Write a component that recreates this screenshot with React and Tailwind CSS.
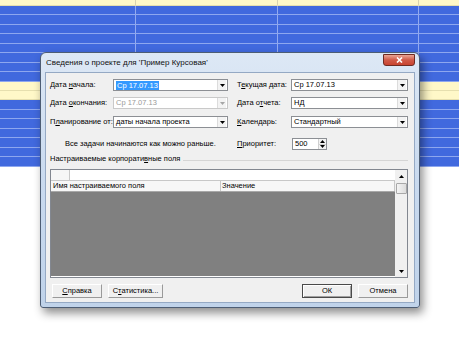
const ROWS = [
  { h: 'h-[6px]', yellow: true },
  { h: 'h-[9px]' }, { h: 'h-[10px]' }, { h: 'h-[9px]' }, { h: 'h-[10px]' },
  { h: 'h-[9px]' }, { h: 'h-[10px]' }, { h: 'h-[9px]' }, { h: 'h-[10px]' },
  { h: 'h-[9px]', yellow: true }, { h: 'h-[9px]', yellow: true },
  { h: 'h-[10px]' }, { h: 'h-[9px]' }, { h: 'h-[10px]' }, { h: 'h-[9px]' },
  { h: 'h-[10px]' }, { h: 'h-[9px]' }, { h: 'h-[10px]' },
];

function Arrow({ disabled, up }) {
  return (
    <svg width="5" height="3" viewBox="0 0 5 3">
      <path d={up ? 'M0 3h5L2.5 0z' : 'M0 0h5L2.5 3z'} fill={disabled ? '#a6a6a6' : '#000'} />
    </svg>
  );
}

function Combo({ value, selected, disabled, width }) {
  return (
    <div className={`h-[12px] flex items-center bg-white border ${width} ${disabled ? 'border-[#c9c9c9]' : 'border-[#8c8f94]'}`}>
      <div className="flex-1 pl-[2px] flex items-center overflow-hidden whitespace-nowrap">
        {selected ? (
          <span className="bg-[#3399ff] text-white px-[1px] leading-[9px]">{value}</span>
        ) : (
          <span className={disabled ? 'text-[#9a9a9a]' : 'text-black'}>{value}</span>
        )}
      </div>
      <div className="w-[9px] h-[10px] mr-[1px] flex items-center justify-center bg-[#f3f3f3] border-l border-[#dcdcdc]">
        <Arrow disabled={disabled} />
      </div>
    </div>
  );
}

function Btn({ children, width, isDefault }) {
  return (
    <div
      className={`h-[14px] ${width} flex items-center justify-center bg-[#f0f0f0] border ${
        isDefault
          ? 'border-[#4a4a4a] shadow-[inset_1px_1px_0_#fff,inset_-1px_-1px_0_#a0a0a0]'
          : 'border-t-white border-l-white border-r-[#9a9a9a] border-b-[#9a9a9a]'
      }`}
    >
      {children}
    </div>
  );
}

export default function App() {
  return (
    <div className="relative w-[459px] h-[360px] bg-white overflow-hidden font-['Liberation_Sans',Arial,sans-serif] text-[7.5px] text-black">
      {/* таблица на фоне */}
      <div className="flex flex-col">
        {ROWS.map((r, i) => (
          <div
            key={i}
            className={`${r.h} flex border-b ${r.yellow ? 'bg-[#fff8c8] border-[#e6dfae]' : 'bg-[#4169de] border-[#8ea7ef]'}`}
          >
            <div className={`w-[136px] border-r ${r.yellow ? 'border-[#d8d3b0]' : 'border-[#93aaf0]'}`} />
            <div className={`w-[142px] border-r ${r.yellow ? 'border-[#d8d3b0]' : 'border-[#93aaf0]'}`} />
            <div className={`w-[141px] border-r ${r.yellow ? 'border-[#d8d3b0]' : 'border-[#93aaf0]'}`} />
            <div className="flex-1" />
          </div>
        ))}
      </div>

      {/* окно диалога */}
      <div className="absolute left-[40px] top-[52px] w-[380px] h-[256px] rounded-t-[6px] rounded-b-[3px] border border-[#4d5d74] bg-gradient-to-b from-[#dde8f5] via-[#c9daef] to-[#c0d3ea] shadow-[3px_5px_10px_rgba(0,0,0,0.45)] flex flex-col px-[4px] pb-[4px]">
        <div className="h-[19px] flex items-center justify-between">
          <span className="pl-[1px] text-[8px] text-[#111] whitespace-nowrap">Сведения о проекте для 'Пример Курсовая'</span>
          <div className="w-[32px] h-[12px] -mt-[6px] rounded-b-[3px] border border-[#6e2b22] bg-gradient-to-b from-[#e9a595] via-[#d05a48] to-[#c8432f] flex items-center justify-center">
            <svg width="7" height="6" viewBox="0 0 7 6">
              <path d="M1 0.5l5 5M6 0.5l-5 5" stroke="#fff" strokeWidth="1.6" />
            </svg>
          </div>
        </div>

        <div className="flex-1 bg-[#f0f0f0] border border-[#95a9c4] flex flex-col pl-[4px] pr-[6px] pt-[6px]">
          {/* строки полей */}
          <div className="flex flex-col gap-[6px]">
            <div className="flex items-center">
              <div className="w-[63px] whitespace-nowrap">Дата <u>н</u>ачала:</div>
              <Combo width="w-[115px]" value="Ср 17.07.13" selected />
              <div className="w-[9px]" />
              <div className="w-[54px] whitespace-nowrap">Т<u>е</u>кущая дата:</div>
              <Combo width="w-[117px]" value="Ср 17.07.13" />
            </div>
            <div className="flex items-center">
              <div className="w-[63px] whitespace-nowrap">Дата <u>о</u>кончания:</div>
              <Combo width="w-[115px]" value="Ср 17.07.13" disabled />
              <div className="w-[9px]" />
              <div className="w-[54px] whitespace-nowrap">Дата о<u>т</u>чета:</div>
              <Combo width="w-[117px]" value="НД" />
            </div>
            <div className="flex items-center mt-[1px]">
              <div className="w-[63px] whitespace-nowrap">П<u>л</u>анирование от:</div>
              <Combo width="w-[115px]" value="даты начала проекта" />
              <div className="w-[9px]" />
              <div className="w-[54px] whitespace-nowrap"><u>К</u>алендарь:</div>
              <Combo width="w-[117px]" value="Стандартный" />
            </div>
          </div>

          <div className="flex items-center mt-[10px] h-[12px]">
            <div className="w-[187px] pl-[15px] whitespace-nowrap">Все задачи начинаются как можно раньше.</div>
            <div className="w-[55px] whitespace-nowrap"><u>П</u>риоритет:</div>
            <div className="w-[35px] h-[12px] bg-white border border-[#8c8f94] flex items-center">
              <span className="flex-1 pl-[2px]">500</span>
              <div className="w-[8px] h-full flex flex-col border-l border-[#d0d0d0] bg-[#f3f3f3]">
                <div className="flex-1 flex items-center justify-center border-b border-[#d0d0d0]"><Arrow up /></div>
                <div className="flex-1 flex items-center justify-center"><Arrow /></div>
              </div>
            </div>
          </div>

          <div className="flex items-center mt-[4px] h-[10px]">
            <span className="whitespace-nowrap">Настраиваемые корпорати<u>в</u>ные поля</span>
            <div className="flex-1 ml-[3px] mt-[2px] border-t border-[#d5d5d5]" />
          </div>

          {/* таблица полей */}
          <div className="mt-[5px] w-[358px] h-[109px] border border-[#828790] bg-white flex">
            <div className="flex-1 flex flex-col">
              <div className="h-[11px] flex border-b border-[#c8c8c8]">
                <div className="w-[19px] border-r border-[#c8c8c8] bg-[#f6f6f6]" />
                <div className="flex-1" />
              </div>
              <div className="h-[11px] flex border-b border-[#a8a8a8] bg-[#f7f7f7]">
                <div className="w-[170px] pl-[2px] border-r border-[#c8c8c8] flex items-center whitespace-nowrap">Имя настраиваемого поля</div>
                <div className="flex-1 pl-[1px] flex items-center border-r border-[#c8c8c8]">Значение</div>
              </div>
              <div className="flex-1 bg-[#808080]" />
              <div className="h-[1px]" />
            </div>
            <div className="w-[12px] bg-[#f0f0f0] flex flex-col items-center">
              <div className="h-[12px] flex items-center justify-center"><Arrow up /></div>
              <div className="mt-[1px] w-[11px] h-[11px] rounded-[1px] border border-[#a8a8a8] bg-gradient-to-r from-[#f4f4f4] to-[#dcdcdc]" />
              <div className="flex-1" />
              <div className="h-[12px] flex items-center justify-center"><Arrow /></div>
            </div>
          </div>

          {/* кнопки */}
          <div className="mt-[6px] flex items-center pl-[2px]">
            <Btn width="w-[50px]"><u>С</u>правка</Btn>
            <div className="w-[6px]" />
            <Btn width="w-[55px]">С<u>т</u>атистика...</Btn>
            <div className="flex-1" />
            <Btn width="w-[50px]" isDefault>ОК</Btn>
            <div className="w-[6px]" />
            <Btn width="w-[50px]">Отмена</Btn>
          </div>
        </div>
      </div>
    </div>
  );
}
